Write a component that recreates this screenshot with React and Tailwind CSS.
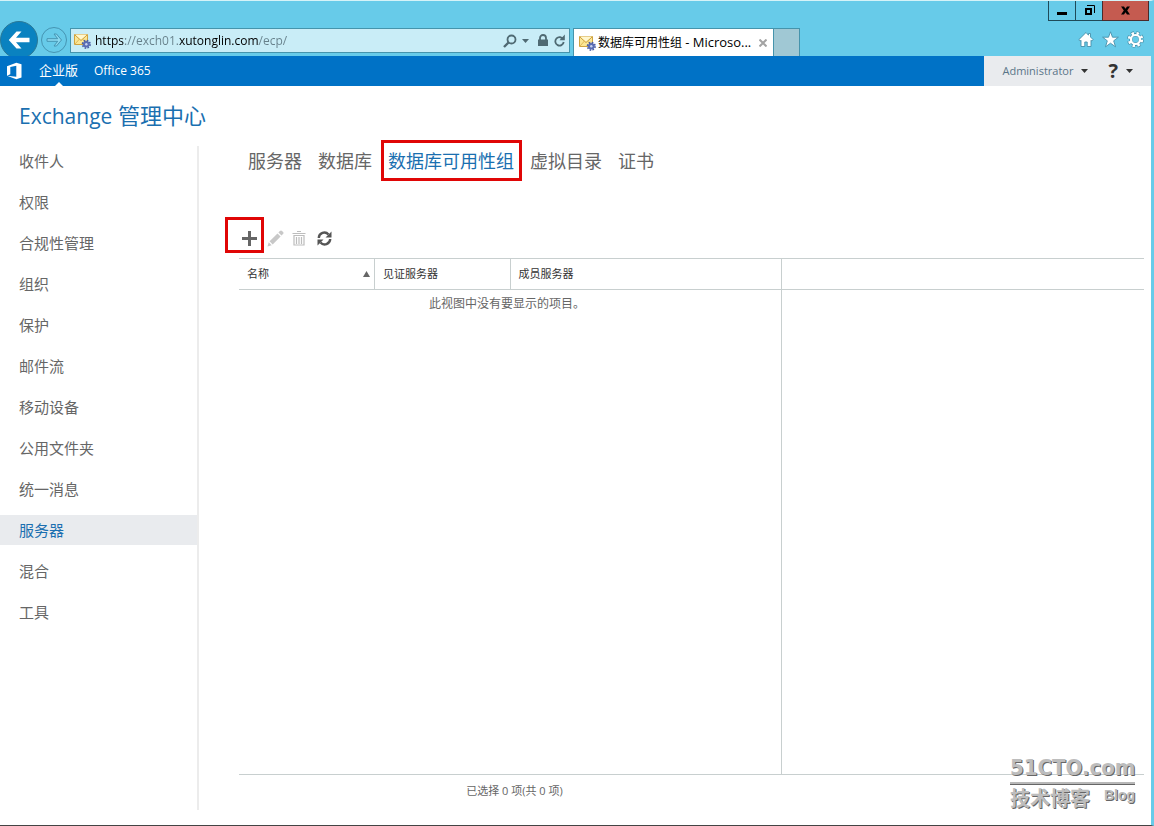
import React from "react";

const sideNav = [
  "收件人",
  "权限",
  "合规性管理",
  "组织",
  "保护",
  "邮件流",
  "移动设备",
  "公用文件夹",
  "统一消息",
  "服务器",
  "混合",
  "工具",
];

const tabs = ["服务器", "数据库", "数据库可用性组", "虚拟目录", "证书"];

const MailIcon = () => (
  <svg width="17" height="16" viewBox="0 0 17 16" className="shrink-0" aria-hidden="true">
    <path d="M0.500 1.500h13v10h-13z" fill="#fbe694" stroke="#d0a340" />
    <path d="M1 2l6 5.500L13 2" fill="none" stroke="#c99a3a" />
    <path d="M1 11l4.500-5M13 11L8.500 6" fill="none" stroke="#e0b95a" />
    <path d="M1 1.500h12L7 6.500z" fill="#fff7cf" />
    <circle cx="12.300" cy="11.300" r="3.300" fill="#5b6db5" />
    <circle cx="12.300" cy="11.300" r="3.800" fill="none" stroke="#4a5ca5" strokeWidth="1.600" strokeDasharray="1.600 1.380" />
    <circle cx="12.300" cy="11.300" r="1.200" fill="#c9d2f0" />
  </svg>
);

const Caret = ({ className }) => (
  <svg width="7" height="4" viewBox="0 0 7 4" className={className} aria-hidden="true">
    <path d="M0 0h7L3.500 4z" fill="currentColor" />
  </svg>
);

const WindowControls = () => (
  <div className="flex justify-end h-5 pr-0.5">
    <button aria-label="最小化" className="flex items-center justify-center w-7 border border-t-0 border-[#1f4a58]">
      <svg width="10" height="10" viewBox="0 0 10 10"><path d="M0 6h10v3H0z" fill="#000" /></svg>
    </button>
    <button aria-label="还原" className="flex items-center justify-center w-[26px] border-b border-[#1f4a58]">
      <svg width="11" height="11" viewBox="0 0 11 11">
        <path d="M2 4h5v5H2z" fill="none" stroke="#000" strokeWidth="2" />
        <path d="M3 0.500h7.500V8" fill="none" stroke="#000" />
      </svg>
    </button>
    <button aria-label="关闭" className="flex items-center justify-center w-[47px] bg-[#c55b50] border border-t-0 border-[#4b2a2a]">
      <svg width="9" height="9" viewBox="0 0 9 9"><path d="M0 0.500h3l1.500 2.300L6 0.500h3L6.200 4.500 9 8.500H6L4.500 6.200 3 8.500H0l2.800-4z" fill="#000" /></svg>
    </button>
  </div>
);

const BrowserBar = () => (
  <header className="h-[55px] overflow-hidden bg-[#67cbe9]">
    <WindowControls />
    <div className="flex items-start">
      <button aria-label="后退" className="flex items-center justify-center w-[38px] h-[38px] shrink-0 rounded-full bg-[#0a82c0] border border-[#2a7896]">
        <svg width="22" height="18" viewBox="0 0 22 18">
          <path d="M8.500 0.500h5L8 6.800H21.500v4.400H8l5.500 6.300h-5L0.800 9z" fill="#fff" />
        </svg>
      </button>
      <button aria-label="前进" className="flex items-center justify-center w-[26px] h-[26px] mt-1.5 ml-[3px] shrink-0 rounded-full border border-[#4594b2]">
        <svg width="16" height="14" viewBox="0 0 16 14">
          <path d="M8 1h2.500l5 6-5 6H8l3.700-4.700H1V5.700h10.700z" fill="#8ad9f0" stroke="#4594b2" />
        </svg>
      </button>
      <div className="flex items-center w-[500px] h-[25px] mt-[7px] ml-[3px] pl-[3px] pr-1 bg-[#c9edf7] border border-[#4594ac] text-[#4f6a73]">
        <MailIcon />
        <input
          aria-label="地址"
          defaultValue="https://exch01.xutonglin.com/ecp/"
          className="flex-1 min-w-0 pl-1 text-[12px] leading-5 outline-none text-transparent bg-clip-text bg-[linear-gradient(90deg,#000_33px,#66808a_33px,#66808a_87px,#000_87px,#000_168px,#66808a_168px)]"
        />
        <button aria-label="搜索">
          <svg width="14" height="14" viewBox="0 0 14 14">
            <circle cx="8.500" cy="5.500" r="4" fill="none" stroke="currentColor" strokeWidth="1.800" />
            <path d="M5.500 8.500L1 13" stroke="currentColor" strokeWidth="2.400" />
          </svg>
        </button>
        <button aria-label="显示地址" className="px-[5px]"><Caret /></button>
        <svg width="10" height="13" viewBox="0 0 10 13" className="ml-1 mr-1.5" aria-hidden="true">
          <path d="M2 6V4a3 3 0 0 1 6 0v2" fill="none" stroke="currentColor" strokeWidth="1.800" />
          <path d="M0 5.500h10V12H0z" fill="currentColor" />
        </svg>
        <button aria-label="刷新">
          <svg width="11" height="13" viewBox="0 0 11 13">
            <path d="M9.300 5.500A4.200 4.200 0 1 0 9.700 8" fill="none" stroke="currentColor" strokeWidth="1.800" />
            <path d="M10.800 0.500v5.800H5.500z" fill="currentColor" />
          </svg>
        </button>
      </div>
      <div className="flex items-center w-[201px] h-7 mt-[7px] ml-[3px] pl-[5px] pr-1.5 bg-white border border-b-0 border-[#4594ac]">
        <MailIcon />
        <span className="flex-1 pl-0.5 text-[12px] text-black whitespace-nowrap">
          数据库可用性组 <span className="text-[13px]">- Microso...</span>
        </span>
        <button aria-label="关闭选项卡">
          <svg width="8" height="8" viewBox="0 0 8 8"><path d="M0.500 0.500l7 7M7.500 0.500l-7 7" stroke="#a3a3a3" strokeWidth="2" /></svg>
        </button>
      </div>
      <button aria-label="新选项卡" className="w-[26px] h-7 mt-[7px] bg-[#a0c8d4] border border-l-0 border-b-0 border-[#4594ac]"></button>
      <div className="flex items-center gap-2 ml-auto mt-2.5 pr-[7px]">
        <button aria-label="主页">
          <svg width="16" height="17" viewBox="0 0 16 17">
            <path d="M8 1.500L0.800 8.700l1.400 1.200 0.800-0.700V15.500h3.800V11h2.400v4.500H13V9.200l0.800 0.700 1.400-1.200-2.700-2.700V2.500h-2v1.700z" fill="#fff" stroke="#4590aa" strokeWidth="0.900" />
          </svg>
        </button>
        <button aria-label="收藏夹">
          <svg width="17" height="17" viewBox="0 0 17 17">
            <path d="M8.500 0.800l2 5.400h5.900l-4.700 3.600 1.800 6-5-3.600-5 3.600 1.800-6L0.600 6.200h5.900z" fill="#fff" stroke="#4590aa" strokeWidth="0.900" />
          </svg>
        </button>
        <button aria-label="工具">
          <svg width="17" height="17" viewBox="0 0 17 17">
            <circle cx="8.500" cy="8.500" r="6.200" fill="none" stroke="#4590aa" strokeWidth="4.400" strokeDasharray="2.900 1.970" />
            <circle cx="8.500" cy="8.500" r="4.700" fill="none" stroke="#4590aa" strokeWidth="3.400" />
            <circle cx="8.500" cy="8.500" r="6.200" fill="none" stroke="#fff" strokeWidth="3" strokeDasharray="2.300 2.570" strokeDashoffset="-0.300" />
            <circle cx="8.500" cy="8.500" r="4.500" fill="none" stroke="#fff" strokeWidth="2.200" />
          </svg>
        </button>
      </div>
    </div>
  </header>
);

const SuiteBar = () => (
  <div className="flex items-stretch h-[30px] bg-[#0072c6] text-white text-[12px]">
    <svg width="18" height="18" viewBox="0 0 18 18" className="self-center ml-1.5 mr-[15px]" aria-hidden="true">
      <path d="M1 4.300L10.300 0.800 15.500 2.300V15.500L10.300 17.200 1 13.700 10.300 14.800V3.700L4.300 5.100V12.300L1 13.700z" fill="#fff" />
    </svg>
    <a href="#enterprise" className="relative flex items-center text-[13px]">
      企业版
      <svg width="8" height="4" viewBox="0 0 8 4" className="absolute bottom-0 left-4" aria-hidden="true">
        <path d="M4 0l4 4H0z" fill="#fff" />
      </svg>
    </a>
    <a href="#office365" className="flex items-center ml-4">Office 365</a>
    <div className="flex items-center ml-auto px-[18px] bg-[#e9ebee] text-[#333]">
      <button className="flex items-center gap-2 text-[11px] text-[#5a7588]">
        Administrator
        <Caret className="text-[#333]" />
      </button>
      <button aria-label="帮助" className="flex items-center gap-2 ml-5 text-[20px] font-bold">
        ?
        <Caret />
      </button>
    </div>
  </div>
);

const Toolbar = () => (
  <div className="flex items-center h-9 mt-11 pl-[3px]">
    <button aria-label="新建" className="relative text-[#666]">
      <svg width="15" height="15" viewBox="0 0 15 15"><path d="M6 0h3v6h6v3H9v6H6V9H0V6h6z" fill="currentColor" /></svg>
      <span className="absolute -top-3.5 -bottom-[7px] -left-[17px] -right-[7px] border-3 border-[#e00606]"></span>
    </button>
    <button aria-label="编辑" className="ml-2.5">
      <svg width="17" height="17" viewBox="0 0 17 17">
        <path d="M0.500 16.500l1.200-4.300 3 3zM2.600 11.300l7.900-7.900 3.100 3.100-7.900 7.900zM11.400 2.500l1.500-1.500a1.500 1.500 0 0 1 2.200 0l0.900 0.900a1.500 1.500 0 0 1 0 2.200l-1.500 1.500z" fill="#c8c8c8" />
      </svg>
    </button>
    <button aria-label="删除" className="ml-2">
      <svg width="14" height="15" viewBox="0 0 14 15">
        <path d="M5 0.500h4M0.500 2.500h13M2 4.500h10v9.500H2zM4.500 6v7M7 6v7M9.500 6v7" fill="none" stroke="#bdbdbd" strokeWidth="1.200" />
      </svg>
    </button>
    <button aria-label="刷新列表" className="ml-[11px]">
      <svg width="15" height="15" viewBox="0 0 15 15">
        <path d="M1.800 7A5.500 5.500 0 0 1 11.500 3.600M13.200 8A5.500 5.500 0 0 1 3.500 11.400" fill="none" stroke="#555" strokeWidth="2.400" />
        <path d="M14.500 0.500v6H8.500zM0.500 14.500v-6h6z" fill="#555" />
      </svg>
    </button>
  </div>
);

const GroupList = () => (
  <>
    <div className="flex flex-1 mt-0.5 border-y border-[#c8cfcf]">
      <div className="w-3/5 border-r border-[#c8cfcf]">
        <table className="w-full table-fixed text-left text-[11px]">
          <thead>
            <tr className="h-[30px] border-b border-[#c8cfcf] text-[#333]">
              <th className="w-[25%] px-2 font-normal border-r border-[#c8cfcf]">
                <span className="flex items-center justify-between -mr-1">
                  名称
                  <svg width="7" height="6" viewBox="0 0 7 6" aria-hidden="true"><path d="M3.500 0L7 6H0z" fill="#666" /></svg>
                </span>
              </th>
              <th className="w-[25%] px-2 font-normal border-r border-[#c8cfcf]">见证服务器</th>
              <th className="px-2 font-normal">成员服务器</th>
            </tr>
          </thead>
          <tbody>
            <tr className="h-[30px] text-[12px] text-[#666]">
              <td colSpan="3" className="pr-1.5 text-center">此视图中没有要显示的项目。</td>
            </tr>
          </tbody>
        </table>
      </div>
      <div className="flex-1">
        <div className="h-[31px] border-b border-[#c8cfcf]"></div>
      </div>
    </div>
    <div className="w-3/5 h-[35px] pl-2 text-center text-[11px] leading-8 text-[#666]">已选择 0 项(共 0 项)</div>
  </>
);

const Watermark = () => (
  <div className="absolute right-4 bottom-3 w-[125px] font-bold text-[#bdbdbd] [text-shadow:1px_1px_0_#666]">
    <div className="text-[22px] leading-7 font-['DejaVu_Sans_Condensed','Liberation_Sans',sans-serif]">51CTO.com</div>
    <div className="h-[3px] bg-[#b8b8b8] border-b border-[#666]"></div>
    <div className="flex justify-between">
      <span className="text-[20px] leading-7">技术博客</span>
      <span className="text-[14px] leading-5 font-['Liberation_Sans',sans-serif]">Blog</span>
    </div>
  </div>
);

export default function App() {
  return (
    <div className="relative flex flex-col min-h-screen bg-white border-t border-b border-r-3 border-t-[#d5f3f8] border-b-[#444] border-r-[#67cbe9] font-['Open_Sans','Noto_Sans_CJK_SC',sans-serif]">
      <BrowserBar />
      <SuiteBar />
      <h1 className="h-[60px] pl-[19px] text-[22px] leading-[58px] text-[#1a6fb0]">
        <span className="text-[21px]">Exchange</span> 管理中心
      </h1>
      <div className="flex flex-1 pb-[15px]">
        <nav className="flex flex-col gap-[11px] w-[199px] shrink-0 border-r-2 border-[#ececec]">
          {sideNav.map((item) => (
            <a
              key={item}
              href="#"
              className={
                item === "服务器"
                  ? "h-[30px] pl-[19px] text-[15px] leading-[30px] bg-[#e9ebee] text-[#1a6fb0]"
                  : "h-[30px] pl-[19px] text-[15px] leading-[30px] text-[#666]"
              }
            >
              {item}
            </a>
          ))}
        </nav>
        <main className="flex flex-col flex-1 pl-10 pr-[7px]">
          <div className="flex gap-4 pl-[9px] text-[18px] leading-[30px]">
            {tabs.map((tab) =>
              tab === "数据库可用性组" ? (
                <a key={tab} href="#" className="relative text-[#1a6fb0]">
                  {tab}
                  <span className="absolute -left-[7px] -right-2 -top-1.5 -bottom-[5px] border-3 border-[#e00606]"></span>
                </a>
              ) : (
                <a key={tab} href="#" className="text-[#666]">{tab}</a>
              )
            )}
          </div>
          <Toolbar />
          <GroupList />
        </main>
      </div>
      <Watermark />
    </div>
  );
}
